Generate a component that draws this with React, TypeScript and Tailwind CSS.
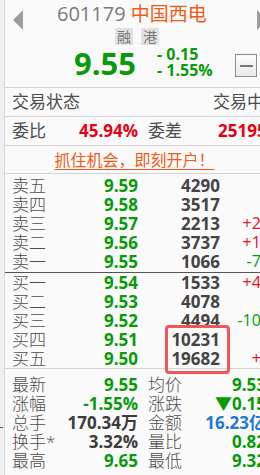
import React from "react";

type BookRow = {
  label: string;
  price: string;
  vol: string;
  chg?: string;
  up?: boolean;
};

const SELL: BookRow[] = [
  { label: "卖五", price: "9.59", vol: "4290" },
  { label: "卖四", price: "9.58", vol: "3517" },
  { label: "卖三", price: "9.57", vol: "2213", chg: "+20", up: true },
  { label: "卖二", price: "9.56", vol: "3737", chg: "+14", up: true },
  { label: "卖一", price: "9.55", vol: "1066", chg: "-79", up: false },
];

const BUY: BookRow[] = [
  { label: "买一", price: "9.54", vol: "1533", chg: "+47", up: true },
  { label: "买二", price: "9.53", vol: "4078" },
  { label: "买三", price: "9.52", vol: "4494", chg: "-100", up: false },
  { label: "买四", price: "9.51", vol: "10231" },
  { label: "买五", price: "9.50", vol: "19682", chg: "+7", up: true },
];

const STATS = [
  { l1: "最新", v1: "9.55", c1: "text-[#089a08]", l2: "均价", v2: "9.53", c2: "text-[#089a08]" },
  { l1: "涨幅", v1: "-1.55%", c1: "text-[#089a08]", l2: "涨跌", v2: "▼0.15", c2: "text-[#089a08]" },
  { l1: "总手", v1: "170.34万", c1: "text-[#3c3c3c]", l2: "金额", v2: "16.23亿", c2: "text-[#1d78d6]" },
  { l1: "换手*", v1: "3.32%", c1: "text-[#3c3c3c]", l2: "量比", v2: "0.82", c2: "text-[#089a08]" },
  { l1: "最高", v1: "9.65", c1: "text-[#089a08]", l2: "最低", v2: "9.32", c2: "text-[#089a08]" },
];

function Row({ r }: { r: BookRow }) {
  return (
    <div className="flex items-center h-[19px] leading-[19px] pl-[7px] whitespace-nowrap">
      <div className="w-[126px] shrink-0 flex justify-between">
        <span className="text-[17px] font-light text-[#4d4d4d]">{r.label}</span>
        <span className="text-[17px] font-bold text-[#089a08]">{r.price}</span>
      </div>
      <div className="w-[82px] shrink-0 text-right text-[17px] font-bold text-[#444]">{r.vol}</div>
      <div
        className={`w-[50px] shrink-0 text-right text-[16px] ${
          r.up ? "text-[#e8101a]" : "text-[#089a08]"
        }`}
      >
        {r.chg ?? ""}
      </div>
    </div>
  );
}

export default function App() {
  return (
    <div className="w-[260px] h-[475px] overflow-hidden flex bg-[#fafafa] font-['Open_Sans','Noto_Sans_CJK_SC',sans-serif]">
      <div className="w-[5px] shrink-0 bg-[#efefef] border-r border-[#d6d6d6] flex flex-col">
        <div className="mt-[427px] h-[1px] w-[3px] bg-[#555]" />
      </div>

      <div className="w-[255px] shrink-0 flex flex-col">
        {/* header */}
        <div className="h-[88px] shrink-0 border-b border-[#d4d4d4] flex flex-col">
          <div className="h-[28px] flex items-start">
            <svg className="ml-[8px] mt-[10px] shrink-0" width="10" height="20" viewBox="0 0 10 20">
              <polygon points="10,0 0,10 10,20" fill="#9c9c9c" />
            </svg>
            <div className="ml-[34px] mt-[1px] whitespace-nowrap text-[20px] leading-[26px] text-[#7a7a7a]">
              601179 <span className="text-[19px] text-[#f05a14]">中国西电</span>
            </div>
            <svg className="ml-auto mr-[-7px] mt-[10px] shrink-0" width="10" height="20" viewBox="0 0 10 20">
              <polygon points="0,0 10,10 0,20" fill="#9c9c9c" />
            </svg>
          </div>
          <div className="h-[20px] flex items-start pl-[110px] gap-[8px]">
            <span className="w-[18px] h-[17px] bg-[#e2e2e2] text-[14px] leading-[17px] text-[#777] text-center">融</span>
            <span className="w-[18px] h-[17px] bg-[#e2e2e2] text-[14px] leading-[17px] text-[#777] text-center">港</span>
          </div>
          <div className="flex items-start">
            <div className="ml-[69px] mt-[-4px] text-[31px] leading-[38px] font-bold text-[#089a08]">9.55</div>
            <div className="ml-[21px] mt-[-2px] flex flex-col text-[16px] leading-[16px] font-bold text-[#089a08]">
              <span>- 0.15</span>
              <span>- 1.55%</span>
            </div>
            <div className="ml-auto mr-[3px] mt-[6px] w-[22px] h-[23px] border border-[#8c8c8c] bg-gradient-to-b from-[#fdfdfd] to-[#e9e9e9] flex items-center justify-center">
              <div className="w-[13px] h-[2px] bg-[#777]" />
            </div>
          </div>
        </div>

        {/* status rows */}
        <div className="h-[29px] shrink-0 border-b border-[#d4d4d4] flex items-center pl-[7px] text-[17px] text-[#4d4d4d] whitespace-nowrap">
          <span className="w-[201px] shrink-0">交易状态</span>
          <span className="shrink-0">交易中</span>
        </div>
        <div className="h-[29px] shrink-0 border-b border-[#d4d4d4] flex items-center pl-[7px] text-[17px] whitespace-nowrap">
          <div className="w-[126px] shrink-0 flex justify-between">
            <span className="text-[#4d4d4d]">委比</span>
            <span className="font-bold text-[#e60012]">45.94%</span>
          </div>
          <span className="ml-[10px] w-[70px] shrink-0 text-[#4d4d4d]">委差</span>
          <span className="shrink-0 font-bold text-[#e60012]">25195</span>
        </div>
        <div className="h-[28px] shrink-0 border-b border-[#d4d4d4] flex items-center justify-center">
          <span className="ml-[4px] text-[16px] leading-[20px] text-[#f05a14] underline underline-offset-[3px]">
            抓住机会，即刻开户！
          </span>
        </div>

        {/* order book */}
        <div className="shrink-0 pt-[2px] pb-[1px] border-b border-[#555]">
          {SELL.map((r) => (
            <Row key={r.label} r={r} />
          ))}
        </div>
        <div className="relative shrink-0 border-b border-[#d4d4d4]">
          {BUY.map((r) => (
            <Row key={r.label} r={r} />
          ))}
          <div className="absolute left-[160px] top-[52px] w-[65px] h-[49px] border-[3px] border-[#f25656] rounded-[4px]" />
        </div>

        {/* stats */}
        <div className="pt-[6px] flex flex-col">
          {STATS.map((s) => (
            <div key={s.l1} className="flex items-center h-[19px] leading-[19px] pl-[7px] text-[17px] whitespace-nowrap">
              <div className="w-[126px] shrink-0 flex justify-between">
                <span className="font-light text-[#4d4d4d]">{s.l1}</span>
                <span className={`font-bold ${s.c1}`}>{s.v1}</span>
              </div>
              <span className="ml-[10px] w-[40px] shrink-0 font-light text-[#4d4d4d]">{s.l2}</span>
              <span className={`w-[78px] shrink-0 text-right font-bold ${s.c2}`}>{s.v2}</span>
            </div>
          ))}
        </div>
      </div>
    </div>
  );
}
